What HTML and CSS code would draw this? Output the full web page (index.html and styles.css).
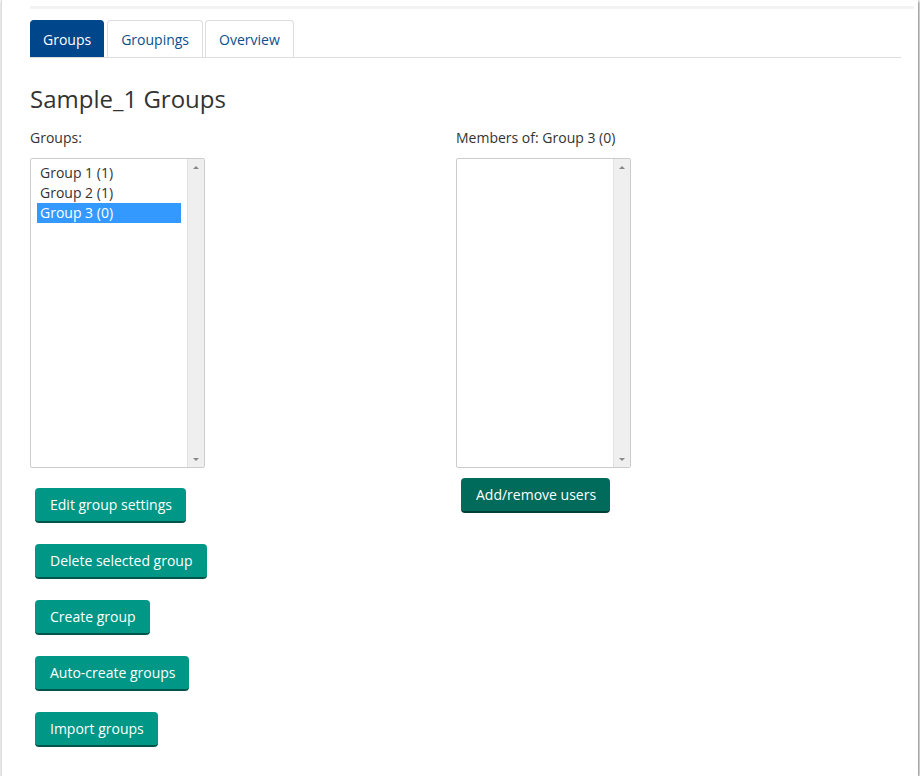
FILE: index.html
```html
<!DOCTYPE html>
<html>
<head>
<meta charset="utf-8">
<link rel="stylesheet" href="styles.css">
</head>
<body>
<div class="card">
  <div class="topbar"></div>
  <div class="tabs">
    <a class="tab active">Groups</a>
    <a class="tab">Groupings</a>
    <a class="tab">Overview</a>
  </div>
  <h2 class="title">Sample_1 Groups</h2>
  <div class="cols">
    <div class="col left">
      <div class="label">Groups:</div>
      <div class="listbox">
        <div class="items">
          <div class="item">Group 1 (1)</div>
          <div class="item">Group 2 (1)</div>
          <div class="item selected">Group 3 (0)</div>
        </div>
        <div class="scroll"><span class="up"></span><span class="down"></span></div>
      </div>
      <div class="buttons">
        <button class="btn">Edit group settings</button>
        <button class="btn">Delete selected group</button>
        <button class="btn">Create group</button>
        <button class="btn">Auto-create groups</button>
        <button class="btn">Import groups</button>
      </div>
    </div>
    <div class="col right">
      <div class="label">Members of: Group 3 (0)</div>
      <div class="listbox">
        <div class="items"></div>
        <div class="scroll"><span class="up"></span><span class="down"></span></div>
      </div>
      <div class="buttons single">
        <button class="btn dark">Add/remove users</button>
      </div>
    </div>
  </div>
</div>
</body>
</html>
```
FILE: styles.css
```css
html, body {
  margin: 0;
  padding: 0;
  background: #fff;
  font-family: "Open Sans", "Liberation Sans", sans-serif;
  font-size: 14px;
  color: #333;
}
.card {
  box-sizing: border-box;
  width: 917px;
  height: 776px;
  margin-left: 1px;
  border-left: 1px solid #ddd;
  box-shadow: 1px 1px 3px rgba(0,0,0,0.55);
  padding: 6px 4px 0 28px;
  background: #fff;
}
.topbar {
  height: 3px;
  background: #f3f3f3;
}
.tabs {
  display: flex;
  margin-top: 11px;
  margin-right: 13px;
  border-bottom: 1px solid #ddd;
  height: 37px;
}
.tab {
  box-sizing: border-box;
  height: 37px;
  padding: 0 13px;
  display: flex;
  align-items: center;
  color: #0b4f8e;
  border: 1px solid #ddd;
  border-bottom: none;
  border-radius: 4px 4px 0 0;
  margin-right: 2px;
  background: #fff;
}
.tab.active {
  background: #00468b;
  border-color: #00468b;
  color: #fff;
  padding: 0 12px;
  margin-right: 3px;
}
.title {
  font-weight: normal;
  font-size: 24px;
  line-height: 30px;
  margin: 26px 0 0 0;
  color: #333;
}
.cols {
  display: flex;
  margin-top: 14px;
}
.col.left { width: 426px; }
.label {
  line-height: 20px;
}
.listbox {
  box-sizing: border-box;
  margin-top: 10px;
  width: 175px;
  height: 310px;
  border: 1px solid #ccc;
  border-radius: 2px;
  display: flex;
  background: #fff;
}
.items {
  flex: 1;
  padding: 4px 6px 0 6px;
}
.item {
  height: 20px;
  line-height: 20px;
  padding-left: 3px;
  color: #333;
}
.item.selected {
  background: #3399ff;
  color: #fff;
}
.scroll {
  width: 16px;
  background: #efefef;
  border-left: 1px solid #e2e2e2;
  display: flex;
  flex-direction: column;
  justify-content: space-between;
  align-items: center;
  padding: 7px 0 6px;
}
.up {
  width: 0; height: 0;
  border-left: 3px solid transparent;
  border-right: 3px solid transparent;
  border-bottom: 3px solid #888;
}
.down {
  width: 0; height: 0;
  border-left: 3px solid transparent;
  border-right: 3px solid transparent;
  border-top: 3px solid #888;
}
.buttons {
  display: flex;
  flex-direction: column;
  align-items: flex-start;
  gap: 21px;
  margin-top: 20px;
  padding-left: 5px;
}
.buttons.single { margin-top: 10px; }
.btn {
  font-family: "Open Sans", "Liberation Sans", sans-serif;
  font-size: 14px;
  color: #fff;
  background: #009787;
  border: none;
  border-bottom: 2px solid #00544a;
  border-radius: 4px;
  height: 35px;
  padding: 1px 14px 0 15px;
  line-height: 32px;
  cursor: pointer;
}
.btn.dark {
  background: #006a5b;
  border-bottom-color: #003f35;
}
```
